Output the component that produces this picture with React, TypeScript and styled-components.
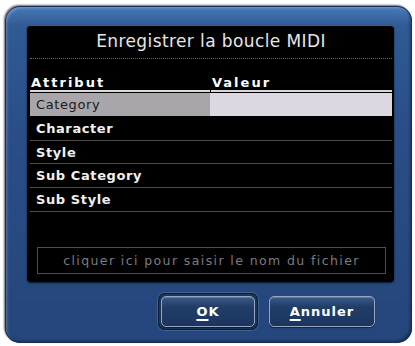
import React from 'react';
import styled, { createGlobalStyle } from 'styled-components';

const GlobalStyle = createGlobalStyle`
  html, body {
    margin: 0;
    padding: 0;
    background: #ffffff;
  }
  body {
    font-family: "DejaVu Sans", "Liberation Sans", sans-serif;
  }
`;

const rows = ['Category', 'Character', 'Style', 'Sub Category', 'Sub Style'];

const App: React.FC = () => {
  return (
    <>
      <GlobalStyle />
      <Page>
        <Dialog>
          <Panel>
            <Title>Enregistrer la boucle MIDI</Title>
            <Table>
              <HeaderRow>
                <HeaderCell>Attribut</HeaderCell>
                <HeaderCell>Valeur</HeaderCell>
              </HeaderRow>
              {rows.map((name, i) => (
                <Row key={name} $selected={i === 0}>
                  <NameCell $selected={i === 0}>{name}</NameCell>
                  <ValueCell $selected={i === 0} />
                </Row>
              ))}
            </Table>
            <FileInput>cliquer ici pour saisir le nom du fichier</FileInput>
          </Panel>
          <Buttons>
            <FocusRing>
              <Button>
                <u>O</u>K
              </Button>
            </FocusRing>
            <Button $wide>
              <u>A</u>nnuler
            </Button>
          </Buttons>
        </Dialog>
      </Page>
    </>
  );
};

export default App;

const Page = styled.div`
  padding: 6px 3px 3px 5px;
`;

const Dialog = styled.div`
  width: 407px;
  height: 337px;
  box-sizing: border-box;
  border-radius: 15px;
  padding: 19px 18px 0 22px;
  background: linear-gradient(180deg, #4a7ab8 0%, #2f5a94 6%, #294d86 40%, #25467c 100%);
  box-shadow: inset 0 0 0 1px #1a2f55, inset 2px 2px 3px rgba(255, 255, 255, 0.25),
    inset -2px -2px 3px rgba(0, 0, 0, 0.35), -1px -1px 2px rgba(0, 0, 0, 0.6);
  display: flex;
  flex-direction: column;
`;

const Panel = styled.div`
  height: 257px;
  box-sizing: border-box;
  background: #000;
  border-radius: 4px;
  border-top: 1px solid #5a5a60;
  box-shadow: 0 1px 2px rgba(0, 0, 0, 0.7);
  padding: 0 2px 0 3px;
  display: flex;
  flex-direction: column;
`;

const Title = styled.div`
  height: 32px;
  line-height: 30px;
  text-align: center;
  color: #e6e6e6;
  font-size: 17px;
  letter-spacing: 0.4px;
  border-bottom: 1px dotted #6a6a6a;
`;

const Table = styled.div`
  margin-top: 16px;
  display: flex;
  flex-direction: column;
`;

const HeaderRow = styled.div`
  display: grid;
  grid-template-columns: 180px 1fr;
  column-gap: 1px;
`;

const HeaderCell = styled.div`
  color: #ffffff;
  font-size: 13px;
  font-weight: bold;
  letter-spacing: 2px;
  padding-left: 1px;
  height: 15px;
  line-height: 15px;
  border-bottom: 2px solid #d8d8d8;
`;

const Row = styled.div<{ $selected?: boolean }>`
  display: grid;
  grid-template-columns: 180px 1fr;
  height: ${({ $selected }) => ($selected ? '23px' : '22.7px')};
  border-bottom: 1px solid ${({ $selected }) => ($selected ? '#000' : '#4a4a4a')};
  margin-top: ${({ $selected }) => ($selected ? '1px' : '0')};
`;

const NameCell = styled.div<{ $selected?: boolean }>`
  background: ${({ $selected }) => ($selected ? '#a8a6aa' : 'transparent')};
  color: ${({ $selected }) => ($selected ? '#1a1a1a' : '#f0f0f0')};
  font-size: 13px;
  font-weight: ${({ $selected }) => ($selected ? 'normal' : 'bold')};
  letter-spacing: 0.6px;
  padding-left: 6px;
  display: flex;
  align-items: center;
`;

const ValueCell = styled.div<{ $selected?: boolean }>`
  background: ${({ $selected }) => ($selected ? '#dcd7e0' : 'transparent')};
`;

const FileInput = styled.div`
  margin: auto 6px 8px 7px;
  height: 27px;
  box-sizing: border-box;
  border: 1px solid #4e4e52;
  color: #7c7c80;
  font-size: 12.5px;
  letter-spacing: 1.4px;
  text-align: center;
  line-height: 25px;
`;

const Buttons = styled.div`
  flex: 1;
  display: flex;
  align-items: center;
  justify-content: flex-end;
  gap: 11px;
  padding-right: 19px;
  padding-bottom: 2px;
`;

const FocusRing = styled.div`
  padding: 3px;
  border-radius: 7px;
  background: #1d3558;
  box-shadow: inset 0 0 0 1px #0e1d36, 0 0 0 1px #3d6296;
`;

const Button = styled.div<{ $wide?: boolean }>`
  width: ${({ $wide }) => ($wide ? '106px' : '94px')};
  height: 31px;
  box-sizing: border-box;
  border-radius: 5px;
  border: 1px solid #9aa6bc;
  background: linear-gradient(180deg, #3a5a8a 0%, #203d68 35%, #1b3560 100%);
  box-shadow: inset 0 1px 0 rgba(255, 255, 255, 0.2), 0 1px 1px rgba(0, 0, 0, 0.5);
  color: #ffffff;
  font-size: 13px;
  font-weight: bold;
  letter-spacing: 1px;
  display: flex;
  align-items: center;
  justify-content: center;

  u {
    text-decoration-thickness: 2px;
    text-underline-offset: 3px;
  }
`;
